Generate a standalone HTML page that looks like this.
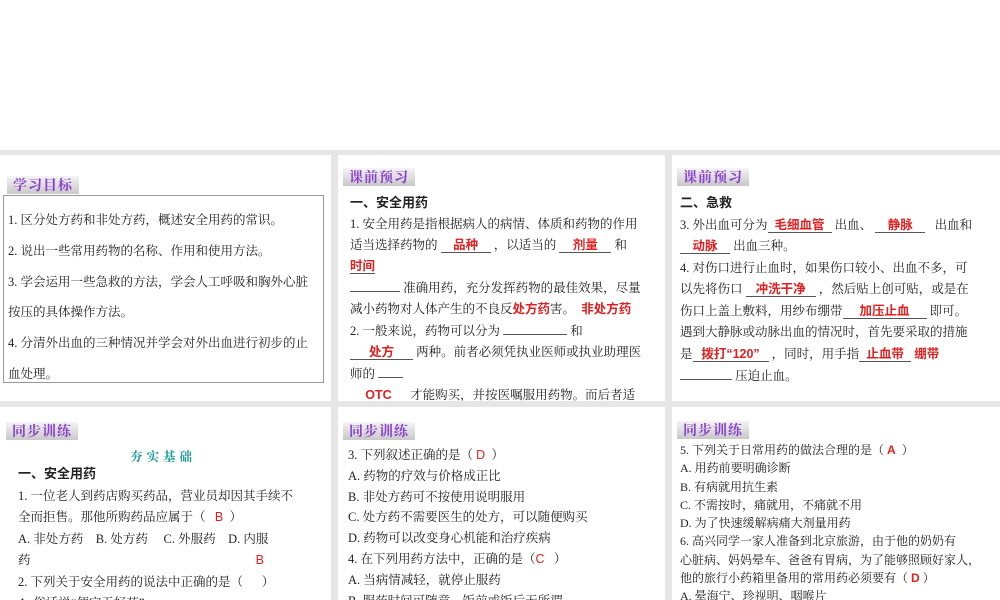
<!DOCTYPE html>
<html><head><meta charset="utf-8"><style>
*{margin:0;padding:0;box-sizing:border-box}
body{width:1000px;height:600px;background:#fff;position:relative;overflow:hidden;font-family:"Liberation Serif","Noto Serif CJK SC",serif;color:#222}
.bg{position:absolute;left:0;top:150px;width:1000px;height:450px;background:#e6e6e6}
.p{position:absolute;background:#fff;overflow:hidden}
.t{position:absolute;height:18px;padding:0 6px;background:linear-gradient(#f4f4f4,#c8c8c8);color:#8a3fd0;font-weight:bold;font-size:14px;line-height:18px;font-family:"Noto Serif CJK SC",serif;letter-spacing:1px}
.tx{position:absolute;font-size:12.5px;white-space:nowrap}
.r{color:#e02020;font-weight:bold;font-family:"Liberation Sans","Noto Sans CJK SC",sans-serif}
.u{display:inline-block;border-bottom:1px solid #555;text-align:center;height:15px;line-height:14px}
.h{font-weight:bold;font-family:"Liberation Sans","Noto Sans CJK SC",sans-serif}
</style></head><body>
<div class="bg"></div>
<!-- panel 1 -->
<div class="p" style="left:0;top:155px;width:331px;height:246px">
<div class="t" style="left:7px;top:21px">学习目标</div>
<div style="position:absolute;left:3px;top:40px;width:321px;height:188px;border:1px solid #999"></div>
<div class="tx" style="left:8px;top:50px;line-height:30.8px;font-size:12.5px">1. 区分处方药和非处方药，概述安全用药的常识。<br>2. 说出一些常用药物的名称、作用和使用方法。<br>3. 学会运用一些急救的方法，学会人工呼吸和胸外心脏<br>按压的具体操作方法。<br>4. 分清外出血的三种情况并学会对外出血进行初步的止<br>血处理。</div>
</div>
<!-- panel 2 -->
<div class="p" style="left:338px;top:155px;width:327px;height:246px">
<div class="t" style="left:5px;top:13px">课前预习</div>
<div class="tx" style="left:12px;top:37px;line-height:21px">
<span class="h" style="font-size:13px">一、安全用药</span><br>
1. 安全用药是指根据病人的病情、体质和药物的作用<br>
适当选择药物的 <span class="u" style="width:50px"><span class="r">品种</span></span> ，以适当的 <span class="u" style="width:52px"><span class="r">剂量</span></span> 和<br>
<span class="u" style="width:25px"><span class="r">时间</span></span><br>
<span class="u" style="width:50px"></span> 准确用药，充分发挥药物的最佳效果，尽量<br>
减小药物对人体产生的不良反<span class="r">处方药</span>害。 &nbsp;<span class="r">非处方药</span><br>
2. 一般来说，药物可以分为 <span class="u" style="width:64px"></span> 和<br>
<span class="u" style="width:63px"><span class="r">处方</span></span> 两种。前者必须凭执业医师或执业助理医<br>
师的 <span class="u" style="width:25px"></span><br>
<span class="u" style="width:57px"><span class="r">OTC</span></span> 才能购买，并按医嘱服用药物。而后者适<br>
于消费者容易自我诊断、自我治疗的小伤小病，简称</div>
</div>
<!-- panel 3 -->
<div class="p" style="left:672px;top:155px;width:328px;height:246px">
<div class="t" style="left:5px;top:13px">课前预习</div>
<div class="tx" style="left:8px;top:37px;line-height:21.5px">
<span class="h" style="font-size:13px">二、急救</span><br>
3. 外出血可分为<span class="u" style="width:64px"><span class="r">毛细血管</span></span> 出血、 <span class="u" style="width:50px"><span class="r">静脉</span></span> &nbsp; 出血和<br>
<span class="u" style="width:50px"><span class="r">动脉</span></span> 出血三种。<br>
4. 对伤口进行止血时，如果伤口较小、出血不多，可<br>
以先将伤口 <span class="u" style="width:70px"><span class="r">冲洗干净</span></span> ，然后贴上创可贴，或是在<br>
伤口上盖上敷料，用纱布绷带<span class="u" style="width:84px"><span class="r">加压止血</span></span> 即可。<br>
遇到大静脉或动脉出血的情况时，首先要采取的措施<br>
是<span class="u" style="width:76px"><span class="r">拨打“120”</span></span> ，同时，用手指<span class="u" style="width:52px"><span class="r">止血带</span></span> <span class="r">绷带</span><br>
<span class="u" style="width:52px"></span> 压迫止血。</div>
</div>
<!-- panel 4 -->
<div class="p" style="left:0;top:407px;width:331px;height:193px">
<div class="t" style="left:6px;top:15px">同步训练</div>
<div class="tx" style="left:130px;top:40px;color:#1a9a9a;font-weight:bold;font-size:12.5px;letter-spacing:4px">夯实基础</div>
<div class="tx" style="left:18px;top:56px;line-height:21.5px">
<span class="h" style="font-size:13px">一、安全用药</span><br>
1. 一位老人到药店购买药品，营业员却因其手续不<br>
全而拒售。那他所购药品应属于（ &nbsp;&nbsp;<span class="r" style="font-weight:normal">B</span> &nbsp;）<br>
A. 非处方药 &nbsp;&nbsp;&nbsp;B. 处方药 &nbsp;&nbsp;&nbsp;&nbsp;C. 外服药 &nbsp;&nbsp;&nbsp;D. 内服<br>
药 <span style="display:inline-block;width:222px"></span><span class="r" style="font-weight:normal">B</span><br>
2. 下列关于安全用药的说法中正确的是（ &nbsp;&nbsp;&nbsp;&nbsp;&nbsp;）<br>
A. 俗话说“便宜无好药”</div>
</div>
<!-- panel 5 -->
<div class="p" style="left:338px;top:407px;width:327px;height:193px">
<div class="t" style="left:5px;top:15px">同步训练</div>
<div class="tx" style="left:10px;top:38px;line-height:20.8px">
3. 下列叙述正确的是（ <span class="r" style="font-weight:normal">D</span> &nbsp;）<br>
A. 药物的疗效与价格成正比<br>
B. 非处方药可不按使用说明服用<br>
C. 处方药不需要医生的处方，可以随便购买<br>
D. 药物可以改变身心机能和治疗疾病<br>
4. 在下列用药方法中，正确的是（<span class="r" style="font-weight:normal">C</span> &nbsp;&nbsp;）<br>
A. 当病情减轻，就停止服药<br>
B. 服药时间可随意，饭前或饭后无所谓</div>
</div>
<!-- panel 6 -->
<div class="p" style="left:672px;top:407px;width:328px;height:193px">
<div class="t" style="left:5px;top:14px">同步训练</div>
<div class="tx" style="left:8px;top:34px;line-height:18.3px;font-size:12px">
5. 下列关于日常用药的做法合理的是（ <span class="r">A</span> &nbsp;）<br>
A. 用药前要明确诊断<br>
B. 有病就用抗生素<br>
C. 不需按时，痛就用，不痛就不用<br>
D. 为了快速缓解病痛大剂量用药<br>
6. 高兴同学一家人准备到北京旅游，由于他的奶奶有<br>
心脏病、妈妈晕车、爸爸有胃病，为了能够照顾好家人，<br>
他的旅行小药箱里备用的常用药必须要有（ <span class="r">D</span> ）<br>
A. 晕海宁、珍视明、咽喉片</div>
</div>
</body></html>
